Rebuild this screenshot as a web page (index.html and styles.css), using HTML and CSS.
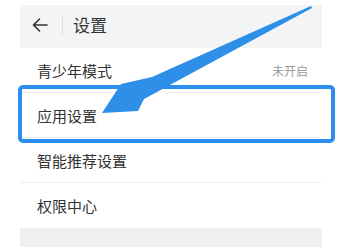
FILE: index.html
```html
<!DOCTYPE html>
<html lang="zh">
<head>
<meta charset="utf-8">
<link rel="stylesheet" href="styles.css">
</head>
<body>
<div class="page">
  <header class="topbar">
    <span class="back">
      <svg width="16" height="14" viewBox="0 0 16 14"><path d="M7.5 1 L1.5 7 L7.5 13 M1.5 7 H15" fill="none" stroke="#333" stroke-width="1.6" stroke-linecap="round" stroke-linejoin="round"/></svg>
    </span>
    <span class="sep"></span>
    <span class="title">设置</span>
  </header>
  <ul class="list">
    <li class="row"><span>青少年模式</span><span class="value">未开启</span></li>
    <li class="row"><span>应用设置</span></li>
    <li class="row"><span>智能推荐设置</span></li>
    <li class="row"><span>权限中心</span></li>
  </ul>
  <div class="footer"></div>
</div>
<div class="highlight"></div>
<svg class="arrow" width="353" height="247" viewBox="0 0 353 247">
  <polygon points="311,6 152,77 121,84 102,113 138,111 144,99 312,8" fill="#2d8fe8"/>
</svg>
</body>
</html>
```
FILE: styles.css
```css
html, body {
  margin: 0;
  padding: 0;
  background: #ffffff;
}
body {
  width: 353px;
  height: 247px;
  overflow: hidden;
  position: relative;
  font-family: "Noto Sans CJK SC", "Noto Sans", sans-serif;
  color: #333;
}
.page {
  padding-top: 5px;
  margin-left: 20px;
  width: 302px;
}
.topbar {
  height: 43px;
  background: #f3f4f6;
  display: flex;
  align-items: flex-start;
  padding-top: 8px;
  box-sizing: border-box;
}
.back {
  margin-left: 12px;
  margin-top: 5px;
  display: flex;
}
.sep {
  width: 1px;
  height: 20px;
  background: #dedede;
  margin-left: 14px;
  margin-top: 2px;
}
.title {
  font-size: 17px;
  line-height: 20px;
  margin-left: 10px;
  margin-top: 2px;
  color: #333;
}
.list {
  list-style: none;
  margin: 0;
  padding: 0;
}
.row {
  height: 45px;
  display: flex;
  align-items: center;
  justify-content: space-between;
  padding: 0 14px 0 17px;
  font-size: 15px;
  border-bottom: 1px solid #efefef;
  box-sizing: border-box;
  position: relative;
}
.row:last-child {
  border-bottom: none;
}
.value {
  font-size: 12px;
  color: #9a9a9a;
}
.footer {
  height: 20px;
  background: #f0f0f0;
}
.highlight {
  position: absolute;
  left: 18px;
  top: 85px;
  width: 317px;
  height: 58px;
  box-sizing: border-box;
  border: 4.5px solid #2b8ef0;
  border-radius: 5px;
}
.arrow {
  position: absolute;
  left: 0;
  top: 0;
}
```
